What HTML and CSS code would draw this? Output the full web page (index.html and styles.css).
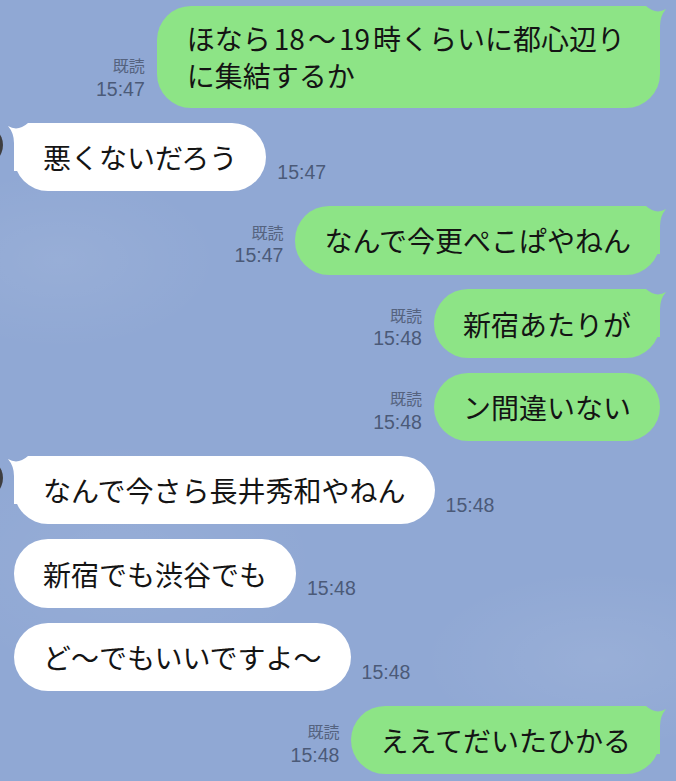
FILE: index.html
```html
<!DOCTYPE html>
<html lang="ja">
<head>
<meta charset="utf-8">
<title>LINE</title>
<link rel="stylesheet" href="styles.css">
</head>
<body>
<div class="chat">
  <div class="row me">
    <div class="meta"><span class="read">既読</span><span class="time">15:47</span></div>
    <div class="bubble green multi">ほなら<span class="num">18</span>～<span class="num">19</span>時くらいに都心辺り<br>に集結するか<svg class="tail" viewBox="0 0 48 48"><path d="M2,3 Q12,9 22,0 L48,0 L48,48 L8,48 L8,20 Q8,10 2,3 Z"/></svg></div>
  </div>
  <div class="row them">
    <div class="avatar"></div>
    <div class="bubble white">悪くないだろう<svg class="tail" viewBox="0 0 48 48"><path d="M2,3 Q12,9 22,0 L48,0 L48,48 L8,48 L8,20 Q8,10 2,3 Z"/></svg></div>
    <div class="meta"><span class="time">15:47</span></div>
  </div>
  <div class="row me">
    <div class="meta"><span class="read">既読</span><span class="time">15:47</span></div>
    <div class="bubble green">なんで今更ぺこぱやねん<svg class="tail" viewBox="0 0 48 48"><path d="M2,3 Q12,9 22,0 L48,0 L48,48 L8,48 L8,20 Q8,10 2,3 Z"/></svg></div>
  </div>
  <div class="row me">
    <div class="meta"><span class="read">既読</span><span class="time">15:48</span></div>
    <div class="bubble green">新宿あたりが<svg class="tail" viewBox="0 0 48 48"><path d="M2,3 Q12,9 22,0 L48,0 L48,48 L8,48 L8,20 Q8,10 2,3 Z"/></svg></div>
  </div>
  <div class="row me">
    <div class="meta"><span class="read">既読</span><span class="time">15:48</span></div>
    <div class="bubble green">ン間違いない</div>
  </div>
  <div class="row them">
    <div class="avatar"></div>
    <div class="bubble white">なんで今さら長井秀和やねん<svg class="tail" viewBox="0 0 48 48"><path d="M2,3 Q12,9 22,0 L48,0 L48,48 L8,48 L8,20 Q8,10 2,3 Z"/></svg></div>
    <div class="meta"><span class="time">15:48</span></div>
  </div>
  <div class="row them">
    <div class="bubble white">新宿でも渋谷でも</div>
    <div class="meta"><span class="time">15:48</span></div>
  </div>
  <div class="row them">
    <div class="bubble white">ど～でもいいですよ～</div>
    <div class="meta"><span class="time">15:48</span></div>
  </div>
  <div class="row me">
    <div class="meta"><span class="read">既読</span><span class="time">15:48</span></div>
    <div class="bubble green">ええてだいたひかる<svg class="tail" viewBox="0 0 48 48"><path d="M2,3 Q12,9 22,0 L48,0 L48,48 L8,48 L8,20 Q8,10 2,3 Z"/></svg></div>
  </div>
</div>
</body>
</html>
```
FILE: styles.css
```css
html, body {
  margin: 0;
  padding: 0;
  height: 100%;
  overflow: hidden;
}
body {
  background-color: #90a8d4;
  background-image:
    radial-gradient(ellipse 160px 90px at 60px 260px, rgba(255,255,255,0.07), rgba(255,255,255,0) 100%),
    radial-gradient(ellipse 200px 120px at 120px 560px, rgba(255,255,255,0.06), rgba(255,255,255,0) 100%),
    radial-gradient(ellipse 180px 90px at 600px 660px, rgba(255,255,255,0.08), rgba(255,255,255,0) 100%);
  font-family: "Noto Sans CJK JP", "Noto Sans", sans-serif;
}
.chat {
  display: flex;
  flex-direction: column;
  gap: 14.8px;
  padding: 6px 16px 0 0;
}
.row {
  display: flex;
  align-items: flex-end;
}
.row.me {
  justify-content: flex-end;
  gap: 12px;
}
.row.them {
  justify-content: flex-start;
  gap: 11px;
  padding-left: 14px;
}
.avatar {
  align-self: flex-start;
  flex: none;
  width: 40px;
  height: 40px;
  margin-top: 2px;
  margin-left: -51px;
  border-radius: 50%;
  background: #3e3e40;
}
.bubble {
  position: relative;
  z-index: 0;
  font-size: 28px;
  line-height: 36px;
  padding: 16.25px 29px;
  border-radius: 34px;
  color: #141414;
  white-space: nowrap;
}
.bubble.multi {
  line-height: 37px;
  padding: 14px 35px 14px 30px;
}
.num {
  margin: 0 3px;
}
.green {
  background: #8de486;
}
.white {
  background: #ffffff;
}
.tail {
  position: absolute;
  z-index: -1;
  top: 0;
  width: 48px;
  height: 48px;
}
.white .tail {
  left: -8px;
}
.green .tail {
  right: -8px;
  transform: scaleX(-1);
}
.white .tail path {
  fill: #ffffff;
}
.green .tail path {
  fill: #8de486;
}
.meta {
  display: flex;
  flex-direction: column;
  align-items: flex-end;
  line-height: 23.5px;
  color: #4b5a78;
  margin-bottom: 7px;
}
.meta .time {
  font-family: "Liberation Sans", Arial, sans-serif;
  font-size: 19.5px;
}
.meta .read {
  font-family: "Noto Sans CJK JP", sans-serif;
  font-size: 16px;
  color: #55637f;
}
```
